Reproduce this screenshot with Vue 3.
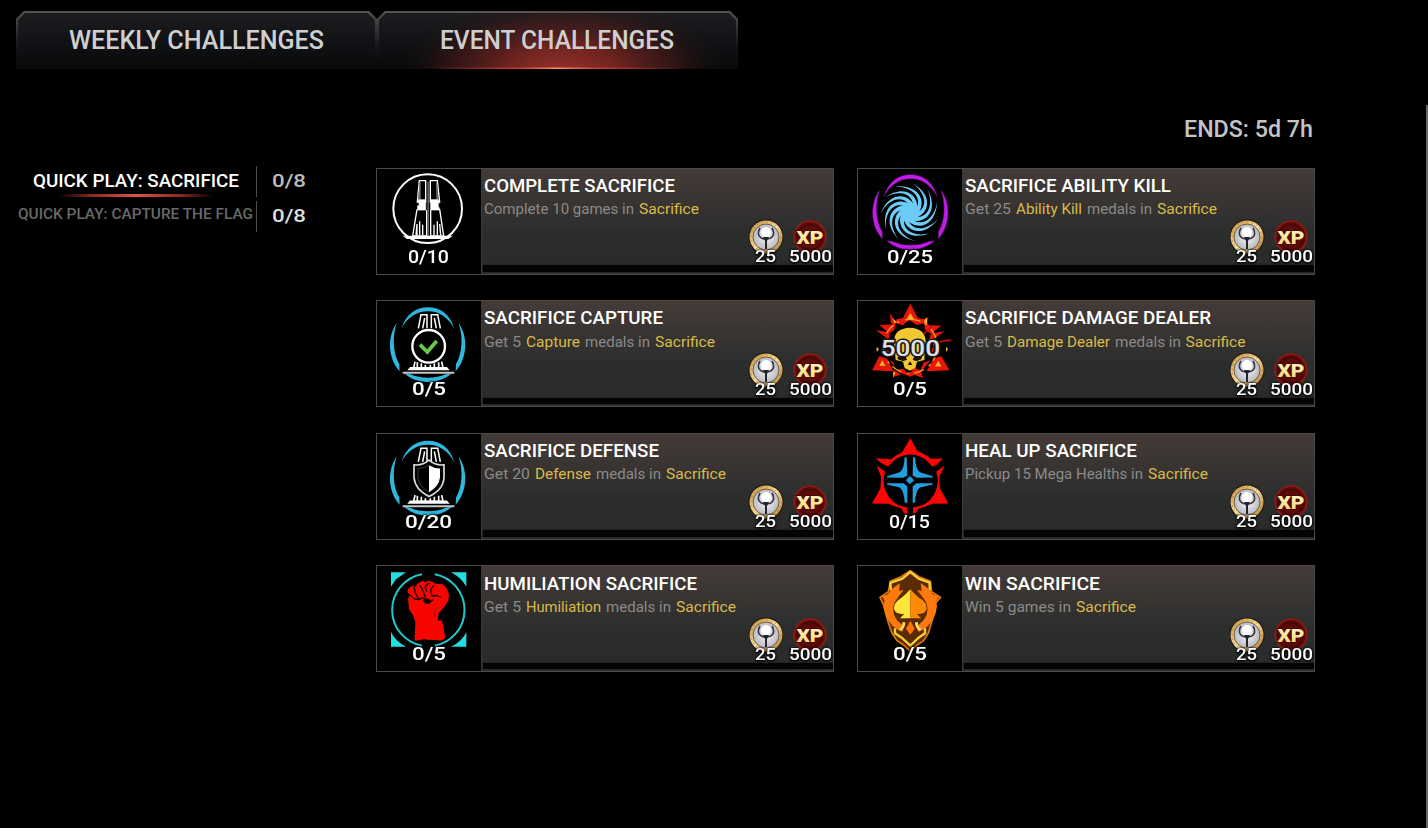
<script setup>
import { h } from 'vue'

// Single line of text stretched to a fixed measure; the svg box equals the cap height.
const FitText = ({ parts, text, w, cap }) =>
  h(
    'svg',
    { width: w, height: cap, class: 'fit' },
    (parts || [[text, 0, w, false]]).map(([t, x, len, hot]) =>
      h(
        'text',
        {
          x,
          y: cap,
          textLength: len,
          lengthAdjust: 'spacingAndGlyphs',
          'font-size': cap / 0.711,
          fill: hot ? '#d9bb4a' : 'currentColor',
        },
        t
      )
    )
  )
FitText.props = ['parts', 'text', 'w', 'cap']

const tabs = [
  { label: 'WEEKLY CHALLENGES', w: 255, active: false },
  { label: 'EVENT CHALLENGES', w: 234, active: true },
]

const playlists = [
  { label: 'QUICK PLAY: SACRIFICE', w: 206, cap: 13.5, active: true },
  { label: 'QUICK PLAY: CAPTURE THE FLAG', w: 235, cap: 11, active: false },
]

const cards = [
  { id: 'complete', box: '18 24 315 321', title: 'COMPLETE SACRIFICE', tw: 191, count: '0/10', cw: 41,
    desc: [['Complete 10 games in', 0, 150], ['Sacrifice', 155, 60, true]] },
  { id: 'ability', box: '471 24 315 321', title: 'SACRIFICE ABILITY KILL', tw: 206, count: '0/25', cw: 46,
    desc: [['Get 25', 0, 46], ['Ability Kill', 51, 66, true], ['medals in', 122, 65], ['Sacrifice', 192, 60, true]] },
  { id: 'capture', box: '18 18 315 321', title: 'SACRIFICE CAPTURE', tw: 179, count: '0/5', cw: 34,
    desc: [['Get 5', 0, 37], ['Capture', 42, 54, true], ['medals in', 101, 65], ['Sacrifice', 171, 60, true]] },
  { id: 'damage', box: '21 18 315 321', title: 'SACRIFICE DAMAGE DEALER', tw: 246, count: '0/5', cw: 34,
    desc: [['Get 5', 0, 37], ['Damage Dealer', 42, 103, true], ['medals in', 150, 66], ['Sacrifice', 220.5, 60, true]] },
  { id: 'defense', box: '18 16.5 315 321', title: 'SACRIFICE DEFENSE', tw: 175, count: '0/20', cw: 47,
    desc: [['Get 20', 0, 46], ['Defense', 51, 56, true], ['medals in', 112, 65], ['Sacrifice', 182, 60, true]] },
  { id: 'heal', box: '21 16.5 315 321', title: 'HEAL UP SACRIFICE', tw: 172, count: '0/15', cw: 41,
    desc: [['Pickup 15 Mega Healths in', 0, 178], ['Sacrifice', 183, 60, true]] },
  { id: 'humiliation', box: '18 18 315 321', title: 'HUMILIATION SACRIFICE', tw: 213, count: '0/5', cw: 34,
    desc: [['Get 5', 0, 37], ['Humiliation', 42, 75, true], ['medals in', 122, 65], ['Sacrifice', 192, 60, true]] },
  { id: 'win', box: '21 18 315 321', title: 'WIN SACRIFICE', tw: 135, count: '0/5', cw: 34,
    desc: [['Win 5 games in', 0, 106], ['Sacrifice', 111, 60, true]] },
]

const arms = Array.from({ length: 11 }, (_, i) => (i * 360) / 11)
</script>

<template>
  <div class="screen">
    <svg class="defs" width="0" height="0">
      <defs>
        <radialGradient id="tabGlow" gradientUnits="userSpaceOnUse" cx="0" cy="0" r="1" gradientTransform="translate(186 62) scale(165 76)">
          <stop offset="0" stop-color="#9c312b" />
          <stop offset="0.35" stop-color="#7c2722" stop-opacity="0.88" />
          <stop offset="0.7" stop-color="#4b1c1a" stop-opacity="0.55" />
          <stop offset="1" stop-color="#1c1011" stop-opacity="0" />
        </radialGradient>
        <linearGradient id="tabBase" x2="0" y2="1">
          <stop offset="0" stop-color="#1d1d20" />
          <stop offset="0.55" stop-color="#111215" />
          <stop offset="1" stop-color="#08090a" />
        </linearGradient>
        <linearGradient id="tabEdge" x2="0" y2="1">
          <stop offset="0" stop-color="#575150" />
          <stop offset="0.4" stop-color="#29292a" />
          <stop offset="0.8" stop-color="#111" stop-opacity="0" />
        </linearGradient>
        <linearGradient id="tabLine">
          <stop offset="0.15" stop-color="#a52f25" stop-opacity="0" />
          <stop offset="0.4" stop-color="#c74030" />
          <stop offset="0.5" stop-color="#ff9164" />
          <stop offset="0.6" stop-color="#c74030" />
          <stop offset="0.85" stop-color="#a52f25" stop-opacity="0" />
        </linearGradient>
        <g id="ring">
          <path d="M94 105C108 59 140 40 174 40s66 19 79 65c-18-35-46-53-79-53s-63 18-80 53Z" />
          <path d="M80 88C53 124 51 190 89 232l-1-22C68 178 67 126 80 88Z" />
          <path d="M266 88c27 36 29 102-9 144l1-22c20-32 21-84 8-122Z" />
          <path d="M103 238c34 35 107 35 142 0l-18 3c-30 14-76 14-106 0Z" />
        </g>
        <g id="obelisk">
          <path d="M145 103l8-41h18v41M184 103V62h19l8 41M158 103l6-31M199 103l-6-31" fill="none" stroke-width="4.500" />
          <path d="M135 203l-4 19h88l-4-19M142 205v15M154 208v12M166 212v8M181 212v8M193 208v12M206 205v15" fill="none" stroke-width="5" />
          <path d="M120 219h111l8 10H112Z" stroke="none" />
          <path d="M98 236h155" stroke="#c4c4c4" stroke-width="6" />
        </g>
        <radialGradient id="silver"><stop offset="0" stop-color="#f4f4f6" /><stop offset="1" stop-color="#b9b9c2" /></radialGradient>
        <linearGradient id="gold" x2="1" y2="1">
          <stop offset="0" stop-color="#bd8c34" /><stop offset="0.5" stop-color="#f7dda0" /><stop offset="1" stop-color="#ad772a" />
        </linearGradient>
        <linearGradient id="xpFill" x2="0" y2="1"><stop offset="0" stop-color="#fffbd0" /><stop offset="1" stop-color="#f5d26a" /></linearGradient>
      </defs>
    </svg>

    <nav class="tabs">
      <div v-for="t in tabs" :key="t.label" class="tab">
        <svg class="tab-bg" width="361" height="58" viewBox="0 0 361 58">
          <path d="M0 58V8L8 0H353L361 8V58Z" fill="url(#tabBase)" />
          <path v-if="t.active" d="M0 58V8L8 0H353L361 8V58Z" fill="url(#tabGlow)" />
          <path d="M1 58V8.500L8.500 1H352.500L360 8.500V58" fill="none" stroke="url(#tabEdge)" stroke-width="2.200" />
          <rect v-if="t.active" y="56.500" width="361" height="1.500" fill="url(#tabLine)" />
        </svg>
        <FitText :text="t.label" :w="t.w" :cap="18.500" />
      </div>
    </nav>

    <div class="ends"><FitText text="ENDS: 5d 7h" :w="129" :cap="16.500" /></div>

    <main class="content">
      <aside class="playlists">
        <div v-for="p in playlists" :key="p.label" class="playlist" :class="{ active: p.active }">
          <div class="name">
            <FitText :text="p.label" :w="p.w" :cap="p.cap" />
            <i v-if="p.active" class="underline"></i>
          </div>
          <div class="score"><FitText text="0/8" :w="34" :cap="13.500" /></div>
        </div>
      </aside>

      <section class="grid">
        <article v-for="c in cards" :key="c.id" class="card">
          <div class="medal">
            <svg class="art" width="105" height="107" :viewBox="c.box">
              <g v-if="c.id === 'complete'" stroke="#fff" fill="none">
                <circle cx="173" cy="146" r="103" stroke-width="6" />
                <path d="M148 62h19v64h-25Z M202 62h-21v64h28Z" stroke-width="4" />
                <path d="M148 68h4v50h-7Z M198 68h4l2 50h-5Z" fill="#777" stroke="none" />
                <path d="M145 119h22v31h-24v-13h5Z M182 119h23l2 8-3 9 6 14h-28Z" fill="#fff" stroke-width="2" />
                <path d="M141 148l-13 80h42v-78M182 150v78h39l-12-80" stroke-width="4" />
                <path d="M138 226l3-34v34M149 226v-42M158 226v-32M192 226v-32M202 226v-42M212 226l-3-34" stroke-width="4" />
                <path d="M174.500 65v165" stroke="#777" stroke-width="4" />
                <path d="M98 227h150l-13 10H111Z" fill="#fff" stroke="none" />
              </g>

              <g v-else-if="c.id === 'ability'">
                <g fill="#c31bea" stroke="#7b129c" stroke-width="1.500" transform="translate(458 4)"><use href="#ring" /></g>
                <g fill="#6dcbf7" transform="translate(629 157)">
                  <circle r="22" />
                  <path v-for="a in arms" :key="a" :transform="`rotate(${a})`" d="M2 19C50 20 84-45 7-88 62-48 47-2 14 3Z" />
                </g>
              </g>

              <g v-else-if="c.id === 'capture'">
                <use href="#ring" fill="#2fb7de" />
                <use href="#obelisk" fill="#fff" stroke="#fff" />
                <circle cx="176" cy="157" r="49" fill="#000" stroke="#fff" stroke-width="7" />
                <path d="M150 152l22 22 28-33" fill="none" stroke="#69c94a" stroke-width="11" />
              </g>

              <g v-else-if="c.id === 'damage'">
                <g fill="#e8150a">
                  <path d="M181 29l22 42 14 9h-72l14-9Z" />
                  <path d="M78 109l38 6 10 13-16 4Z M88 93l52-2-24 25Z M274 95l-52-2 24 24Z M284 112l-38 6-8 11 16 4Z" />
                  <path d="M88 186l24 8 18 38-64-3Z M274 186l-24 8-20 38 68-3Z" />
                  <path d="M120 58l12 20 15 10-13 12-12-16Z M236 69l-8 25-12 10-8-22Z M133 228l20 14-24 7Z M212 228l-20 14 27 10Z" />
                  <path d="M112 110l28-34 42-8 40 8 28 36 4 42-12 44-30 36-32 14-34-14-30-38-10-42Z" />
                </g>
                <path fill="#050302" d="M119 118l14-10 3-22 22 8 20-16 22 15 24-5 0 18 19 14-6 17 15 20-13 17 6 24-24 8-10 23-18-8-16 20-18-17-22 4-7-23-18-10 7-20-18-18 15-18Z" />
                <path fill="none" stroke="#ef9e23" stroke-width="4" stroke-dasharray="31 13 8 18" d="M181 76a81 81 0 1 1-1 162 81 81 0 0 1 1-162" />
                <path fill="#f5b42c" d="M181 57l11 18h-22Z M221 83l9-13 2 20Z M88 215l9-16 9 17Z M255 217l10-17 9 18Z M80 158l7 8-7 8Z M288 158l6 8-6 8Z M134 89l-7-19 12 15Z M136 237l-7 14 1-20Z" />
                <path fill="#f2c832" d="M132 143q0-40 48-42 46 2 47 42l-4 55-22 5-5 19-16 8-16-8-5-19-22-5Z" />
                <path fill="#1c1305" d="M143 188l22-5 6 14-12 5-16-6Z M196 183l20 5-2 8-15 6-11-5Z M180 202l7 11h-14Z" />
                <path stroke="#c90e09" stroke-width="5" d="M267 144l24-5h13M245 98l-24 22" fill="none" />
                <text class="digits" x="92" y="187" textLength="178" lengthAdjust="spacingAndGlyphs" font-size="68">5000</text>
              </g>

              <g v-else-if="c.id === 'defense'">
                <use href="#ring" fill="#2fb7de" />
                <use href="#obelisk" fill="#fff" stroke="#fff" />
                <path d="M177 98q20 17 45 14v38q-2 37-45 57-42-21-45-57v-38q25 3 45-14Z" fill="#000" stroke="#ddd" stroke-width="5" />
                <path d="M177 113q16 10 33 10v27q-3 27-33 44Z" fill="#fff" />
                <path d="M177 113q-16 10-33 10v27q3 27 33 44" fill="none" stroke="#555" stroke-width="2" />
              </g>

              <g v-else-if="c.id === 'heal'">
                <g fill="#fb0505">
                  <path d="M181 32l22 40q20 5 40 22l36-1-18 18-15 7q-27-34-66-34t-66 34l-24-14-12-12 45 3q17-14 33-20Z" />
                  <path d="M80 114l25 18-4 22q-2 20 8 41 22 43 63 44l-1 23q-12-6-16-19-20-5-40-14l-49-1 25-45q2-19 2-35Z" />
                  <path d="M284 114l-25 18 4 22q2 20-8 41-22 43-66 44v23q12-6 17-19 22-5 41-14l48-1-25-45q-2-19-2-35Z" />
                </g>
                <circle cx="181" cy="157" r="76" fill="#000" />
                <g fill="#229fdc">
                  <path d="M170 89l2 55-12 7-49-1v-4l38-12q13-7 15-45Z" />
                  <path d="M189 89l-1 55 12 7 48-1v-4l-38-12q-13-7-15-45Z" />
                  <path d="M111 167h49l12 9v51l-8-3q-2-36-15-44l-38-9Z" />
                  <path d="M248 167h-48l-12 9v51l7-3q2-36 15-44l38-9Z" />
                  <path d="M180 145l13 13-13 13-13-13Z" stroke="#041d2c" stroke-width="2" />
                </g>
              </g>

              <g v-else-if="c.id === 'humiliation'">
                <path fill="#20dfe3" d="M63 40h45l-30 21-15 22Z M243 40h46v43q-16-28-46-43Z M63 219q12 27 45 44H63Z M289 219v44h-46q34-16 46-44Z" />
                <path d="M156 45.500A109 109 0 0 0 156 260M194 45.500A109 109 0 0 1 194 260" fill="none" stroke="#20c8cd" stroke-width="6" />
                <path fill="#f90500" d="M115 89l11-9 11 3 4-8 16-9 10 3 9-4 15 5 5 4 21 1 13 13 7 19-2 18-13 20-16 17-3 24 2 12 20 39-11 8-47-5-33 5 2-55-5-18-14-21-3-31 6-14-8-7Z" />
                <path fill="#f90500" d="M144 190l72-6 10 52-8 3-44 3-41-8Z" />
                <path fill="none" stroke="#150000" stroke-width="4" stroke-linecap="round" stroke-linejoin="round" d="M132 84l4 18 11 20M150 80l8 13 8 22M177 73l-12 10 5 13M191 80l-9 11 3 18M122 110l12 10 12 2 14-6 3 12 13 5 12-10M187 111l12-2 12 5" />
                <path fill="#150000" d="M161 117l14 2 10 6-7 9-14-1Z" />
                <path fill="none" stroke="#aa0703" stroke-width="3" d="M202 144q-13 17-9 31" />
              </g>

              <g v-else>
                <path fill="#5a2b04" stroke="#e4760e" stroke-width="5" stroke-linejoin="round" d="M181 35l26 18 34 14 4 31 27 17-15 16-3 28-10 34-9 29-14 23-20 13-20 19-20-19-20-13-15-23-11-31-9-32-6-23-10-21 25-17 6-31 32-14Z" />
                <path fill="none" stroke="#f3cf37" stroke-width="7" d="M123 94l-2-22 36-13 24-20 25 20 33 12v24" />
                <path fill="#fb790f" d="M150 73q-47 28-49 70 6 47 43 70l13 5 6-17q-22-12-31-34-8-27 10-49l19-26-14 4Z M212 73q47 28 49 70-6 47-43 70l-13 5-6-17q22-12 31-34 8-27-10-49l-19-26 14 4Z" />
                <path fill="#fb790f" d="M96 112l18-6-5 28Z M267 112l-18-6 5 28Z" />
                <path fill="none" stroke="#f3cf37" stroke-width="7" d="M135 208v15l20 13 26 24 25-24 19-13v-15" />
                <path fill="#5a2b04" d="M181 82q-26 28-48 53-5 31 16 40l-9 10h81l-8-10q23-11 15-40-24-23-47-53Z" />
                <path fill="#ffe53b" d="M181 91v87h-31l13-14q-25 4-31-14-1-17 16-29 14-9 33-30Z" />
                <path fill="#ff8a09" d="M181 91q18 21 33 30 17 12 16 29-5 18-30 14l13 14h-32Z" />
                <path fill="#ffe06b" d="M166 190q0 17-14 26l-4-6q11-8 9-20Z M195 190q0 17 14 26l5-6q-12-8-10-20Z" />
                <path fill="#ff750c" d="M181 185l13 24-13 18-13-18Z" />
              </g>
            </svg>
            <div class="count"><FitText :text="c.count" :w="c.cw" :cap="13.500" /></div>
          </div>

          <div class="body">
            <FitText class="title" :text="c.title" :w="c.tw" :cap="13.300" />
            <FitText class="desc" :parts="c.desc" :w="300" :cap="11" />
            <div class="rewards">
              <div class="reward">
                <svg width="36" height="36" viewBox="-18 -18 36 36">
                  <circle r="17.500" fill="#211509" />
                  <circle r="16.500" fill="url(#gold)" />
                  <circle r="15" fill="none" stroke="#8d6224" stroke-width="0.800" stroke-dasharray="1 3.700" />
                  <circle r="13" fill="url(#silver)" stroke="#5b4520" stroke-width="0.800" />
                  <path d="M-6-9C-10-2-6 2 0 2S10-2 6-9" fill="none" stroke="#34343f" stroke-width="1.600" />
                  <circle cy="-5" r="5" fill="#fff" />
                  <path d="M-3 0H3L1 4V12H-1V4Z" fill="#24242e" />
                </svg>
                <FitText class="amount" text="25" :w="21" :cap="11.500" />
              </div>
              <div class="reward">
                <svg width="36" height="36" viewBox="-18 -18 36 36">
                  <circle r="15.800" fill="#5a0b0a" stroke="#8c1b13" stroke-width="1.800" />
                  <circle r="12.500" fill="none" stroke="#3a0506" stroke-width="1" />
                  <text class="xp" x="-13.500" y="7" textLength="27" lengthAdjust="spacingAndGlyphs" font-size="19">XP</text>
                </svg>
                <FitText class="amount" text="5000" :w="43" :cap="11.500" />
              </div>
            </div>
            <div class="progress"></div>
          </div>
        </article>
      </section>
    </main>
    <div class="scrollbar"></div>
  </div>
</template>

<style>
html, body { background: #000; }
body { margin: 0; overflow: hidden; }
</style>

<style scoped>
.screen {
  position: relative;
  box-sizing: border-box;
  width: 1428px;
  height: 828px;
  overflow: hidden;
  padding: 11px 0 0 16px;
  background: #000;
  color: #fff;
  font-family: Roboto, "Liberation Sans", sans-serif;
  font-weight: 500;
}
.defs { position: absolute; }
.fit { display: block; overflow: visible; flex: none; }
.tabs { display: flex; height: 58px; color: #cfcfcf; }
.tab { position: relative; display: flex; justify-content: center; width: 361px; padding: 18.500px 1px 0 0; box-sizing: border-box; }
.tab-bg { position: absolute; inset: 0; }
.tab .fit { position: relative; }
.ends { display: flex; justify-content: flex-end; width: 1297px; margin-top: 51px; color: #c4c4c4; }
.content { display: flex; margin-top: 31px; }
.playlists { display: flex; flex-direction: column; gap: 4px; width: 360px; margin-top: -1.500px; }
.playlist { display: flex; height: 31px; color: #696969; }
.name { position: relative; display: flex; flex-direction: column; align-items: center; width: 241px; box-sizing: border-box; border-right: 1.500px solid #4e4e4e; padding: 7px 1px 0 0; }
.active .name { color: #fff; padding-top: 7px; }
.underline {
  width: 156px; height: 3px; margin-top: 7.500px;
  background: linear-gradient(90deg, transparent, #8b2a23 22%, #e05248 50%, #8b2a23 78%, transparent);
}
.score { padding: 7px 0 0 15px; color: #dedede; }
.active .score { color: #bdbdbd; }
.grid { display: grid; grid-template-columns: 458px 458px; grid-auto-rows: 107px; gap: 25.600px 23px; }
.card { position: relative; display: flex; box-sizing: border-box; background: #000; }
.card::after { content: ""; position: absolute; inset: 0; border: 1.500px solid #4b4a49; pointer-events: none; }
.medal { position: relative; width: 105px; }
.art { display: block; }
.count { position: absolute; left: 0; right: 0; top: 81px; display: flex; justify-content: center; filter: drop-shadow(0 0 1px #000) drop-shadow(0 0 1px #000); }
.body {
  display: flex; flex-direction: column; flex: 1; box-sizing: border-box; padding: 11.300px 1.500px 3px 2px;
  background: linear-gradient(#443b38 0, #383432 32%, #2c2e2e 58%, #292c2b 88%, #35322f 100%);
  border-left: 1px solid #3c3a38;
}
.desc { margin-top: 11px; color: #8b8a88; font-weight: 400; }
.rewards { display: flex; justify-content: flex-end; margin-top: 5px; height: 45.500px; }
.reward { display: flex; flex-direction: column; align-items: center; width: 44.500px; }
.reward svg { flex: none; }
.amount { margin-top: -5px; filter: drop-shadow(0 0 1px #000) drop-shadow(0 1px 1px #000); }
.progress { height: 6.500px; background: #040303; margin: auto -1px 0 -1px; box-shadow: 0 0 2px #120c08; }
.xp { font-weight: 900; fill: url(#xpFill); stroke: #4b0706; stroke-width: 2px; paint-order: stroke; }
.digits { font-weight: 500; fill: #dfe0e6; stroke: #17171b; stroke-width: 9px; paint-order: stroke; }
.scrollbar { position: absolute; left: 1426px; top: 105px; bottom: 0; width: 1.500px; background: #666; }
</style>
